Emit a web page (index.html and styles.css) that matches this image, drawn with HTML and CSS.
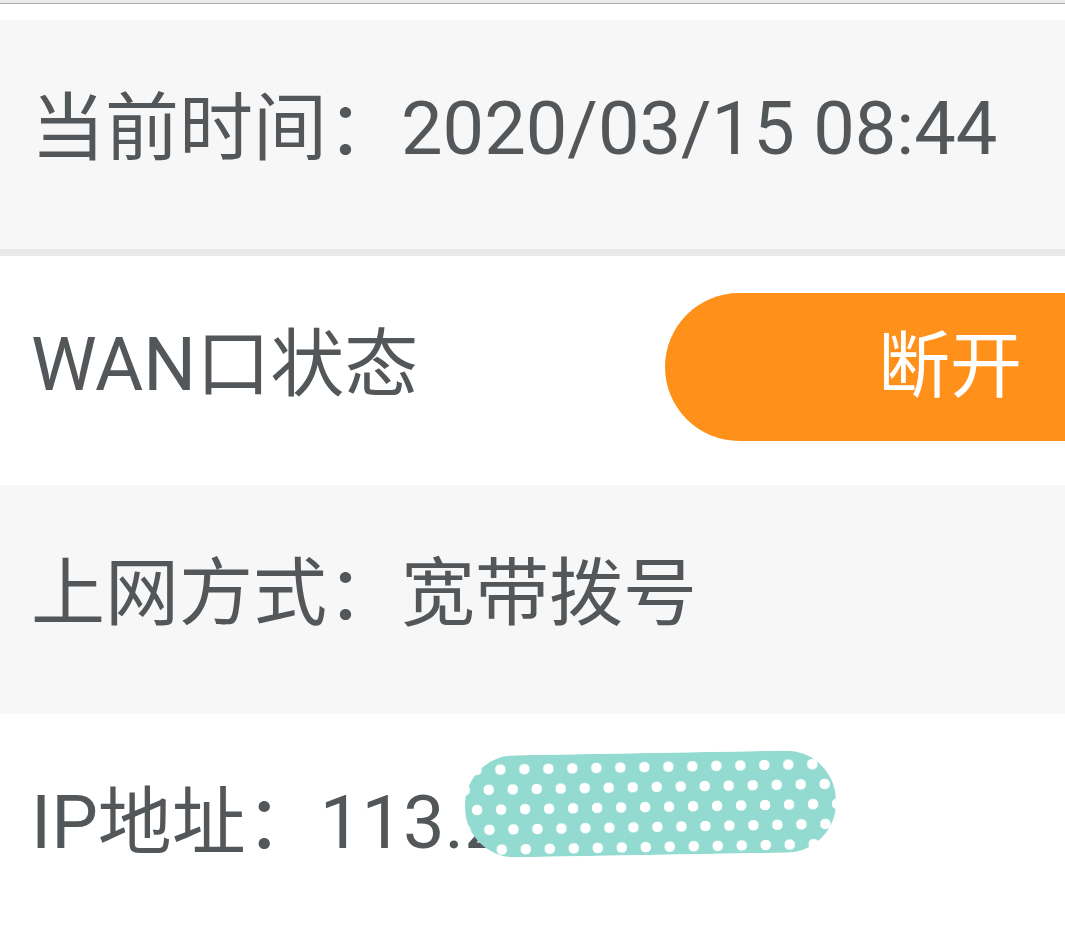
FILE: index.html
```html
<!DOCTYPE html>
<html lang="zh">
<head>
<meta charset="utf-8">
<link rel="stylesheet" href="styles.css">
</head>
<body>
<div class="topbar"></div>
<div class="list">
  <div class="row grey sep"><span class="label">当前时间：2020/03/15 08:44</span></div>
  <div class="row white">
    <span class="label">WAN口状态</span>
    <button class="pill">断开</button>
  </div>
  <div class="row grey"><span class="label">上网方式：宽带拨号</span></div>
  <div class="row white ip">
    <span class="label">IP地址：113.2</span>
    <div class="mask"></div>
  </div>
</div>
</body>
</html>
```
FILE: styles.css
```css
html, body {
  margin: 0;
  padding: 0;
  background: #ffffff;
  overflow: hidden;
}
body {
  font-family: Roboto, "Noto Sans CJK SC", sans-serif;
  color: #53575a;
}
.topbar {
  height: 3px;
  background: #ececec;
  border-bottom: 1px solid #aeaeae;
  margin-bottom: 16px;
}
.list {
  display: flex;
  flex-direction: column;
}
.row {
  display: flex;
  align-items: center;
  justify-content: space-between;
  height: 229px;
  padding-left: 31px;
  box-sizing: border-box;
}
.grey { background: #f7f7f7; }
.white { background: #ffffff; }
.sep {
  border-bottom: 7px solid #e8e8e8;
  height: 236px;
}
.label {
  font-size: 74px;
  line-height: 1;
  position: relative;
  top: -6px;
  white-space: nowrap;
}
.pill {
  border: none;
  background: #ff911b;
  color: #ffffff;
  font-family: Roboto, "Noto Sans CJK SC", sans-serif;
  font-size: 72px;
  width: 400px;
  height: 148px;
  border-radius: 74px 0 0 74px;
  text-align: right;
  padding: 0 43px 0 0;
  margin-top: -8px;
  line-height: 1;
}
.ip { position: relative; }
.mask {
  position: absolute;
  left: 465px;
  top: 39px;
  width: 371px;
  height: 102px;
  border-radius: 50px;
  transform: rotate(-1deg);
  background-color: #93dbd0;
  background-image:
    radial-gradient(circle, #ffffff 5px, transparent 5.6px),
    radial-gradient(circle, #ffffff 5px, transparent 5.6px);
  background-size: 24px 40px;
  background-position: 0 -6px, 12px 14px;
}
```
